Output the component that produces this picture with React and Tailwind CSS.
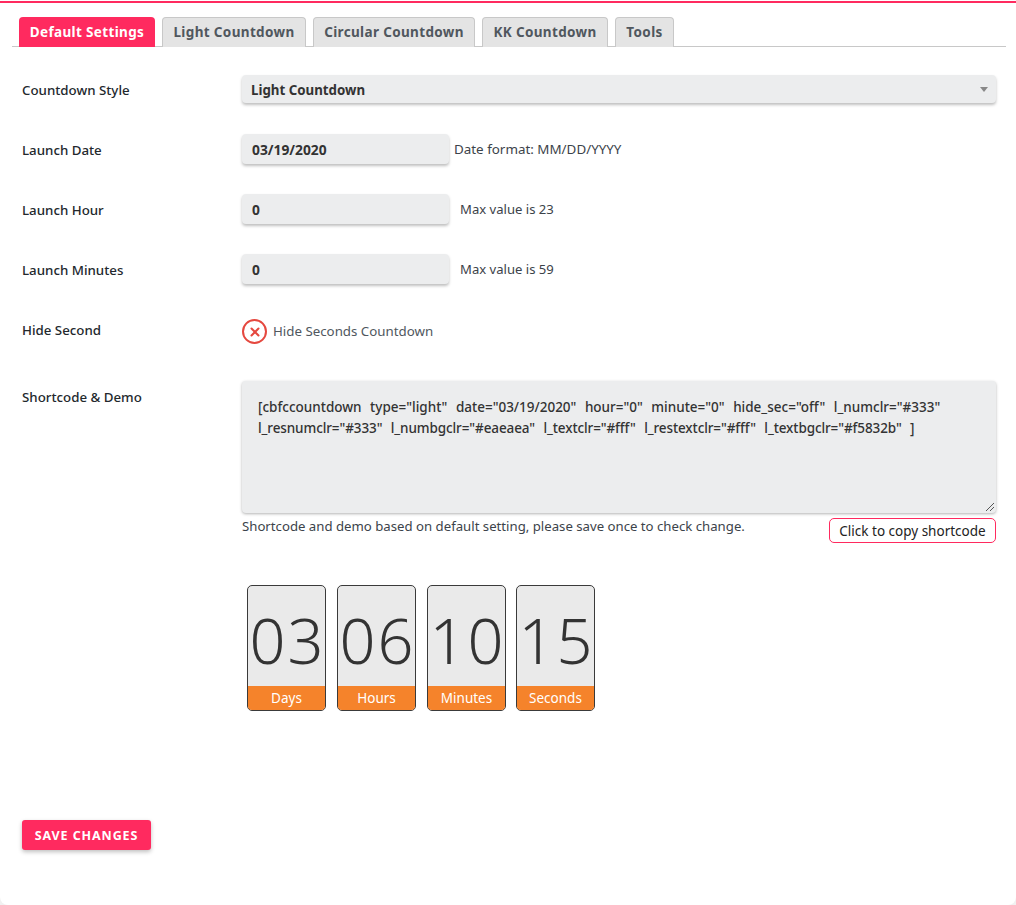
import React from 'react';
import { X } from 'lucide-react';

const tabs = ['Default Settings', 'Light Countdown', 'Circular Countdown', 'KK Countdown', 'Tools'];
const tabWidths = ['w-[136px]', 'w-[144px]', 'w-[162px]', 'w-[126px]', 'w-[59px]'];

const counters = [
  { value: '03', label: 'Days' },
  { value: '06', label: 'Hours' },
  { value: '10', label: 'Minutes' },
  { value: '15', label: 'Seconds' },
];

const fieldClass =
  'h-[30px] rounded-[4px] bg-[#ecedee] px-[10px] text-[13.8px] font-bold leading-[31px] text-[#333] shadow-[0_2px_3px_rgba(0,0,0,0.25)]';

const Row = ({ label, className, labelClass = 'pt-[3px]', children }) => (
  <div className={`flex ${className}`}>
    <div className={`w-[220px] shrink-0 text-[13.3px] font-medium text-[#23282d] ${labelClass}`}>{label}</div>
    <div className="min-w-0 flex-1">{children}</div>
  </div>
);

const App = () => {
  return (
    <div className="h-[905px] bg-[#f1f1f1] font-['Noto_Sans',sans-serif]">
      <div className="h-full rounded-b-[8px] bg-white pt-[1px]">
        <div className="h-[2px] bg-[#ff2a5f]" />
        <div className="ml-[12px] mr-[10px] mt-[14px] flex h-[30px] gap-[7px] border-b border-[#c8c8c8] pl-[7px]">
          {tabs.map((tab, i) => (
            <div
              key={tab}
              className={`flex h-[30px] items-center justify-center rounded-t-[4px] text-[13.5px] font-bold tracking-[0.35px] ${tabWidths[i]} ${
                i === 0
                  ? 'bg-[#ff2a5f] text-white'
                  : 'border border-b-0 border-[#c8c8c8] bg-[#e4e4e4] text-[#50575e]'
              }`}
            >
              {tab}
            </div>
          ))}
        </div>

        <div className="pl-[22px] pr-[20px]">
          <Row label="Countdown Style" className="mt-[28px] h-[28px] items-center">
            <div className={`${fieldClass} flex !h-[28px] items-center justify-between !px-[9px]`}>
              <span className="pt-[2px] text-[13.3px]">Light Countdown</span>
              <span className="mr-[-1px] h-0 w-0 border-x-[4px] border-t-[5px] border-x-transparent border-t-[#888]" />
            </div>
          </Row>

          <Row label="Launch Date" className="mt-[31px] h-[30px] items-center">
            <div className="flex items-center">
              <div className={`${fieldClass} w-[207px]`}>03/19/2020</div>
              <span className="ml-[5px] text-[13.4px] text-[#3c434a]">Date format: MM/DD/YYYY</span>
            </div>
          </Row>

          <Row label="Launch Hour" className="mt-[30px] h-[30px] items-center">
            <div className="flex items-center">
              <div className={`${fieldClass} w-[207px]`}>0</div>
              <span className="ml-[11px] pt-[1px] text-[13.1px] text-[#3c434a]">Max value is 23</span>
            </div>
          </Row>

          <Row label="Launch Minutes" className="mt-[30px] h-[30px] items-center">
            <div className="flex items-center">
              <div className={`${fieldClass} w-[207px]`}>0</div>
              <span className="ml-[11px] pt-[1px] text-[13.1px] text-[#3c434a]">Max value is 59</span>
            </div>
          </Row>

          <Row label="Hide Second" className="mt-[35px] h-[32px] items-start" labelClass="pt-[2px]">
            <div className="flex items-center">
              <div className="flex h-[25px] w-[25px] items-center justify-center rounded-full border-2 border-[#e5483f] text-[#e5483f]">
                <X size={14} strokeWidth={3.5} />
              </div>
              <span className="ml-[6px] text-[13.3px] text-[#50575e]">Hide Seconds Countdown</span>
            </div>
          </Row>

          <Row label="Shortcode & Demo" className="mt-[30px]" labelClass="pt-[7px]">
            <div className="relative h-[132px] rounded-[4px] bg-[#ecedee] px-[16px] pt-[16px] text-[13.5px] font-medium leading-[21px] text-[#333] shadow-[0_1px_3px_rgba(0,0,0,0.3)] [word-spacing:5px]">
              <div className="whitespace-nowrap">[cbfccountdown type="light" date="03/19/2020" hour="0" minute="0" hide_sec="off" l_numclr="#333"</div>
              <div className="whitespace-nowrap tracking-[-0.1px]">l_resnumclr="#333" l_numbgclr="#eaeaea" l_textclr="#fff" l_restextclr="#fff" l_textbgclr="#f5832b" ]</div>
              <svg className="absolute bottom-[1px] right-[1px]" width="10" height="10" viewBox="0 0 10 10">
                <path d="M1 9 L9 1 M5 9 L9 5" stroke="#555" strokeWidth="1" fill="none" />
              </svg>
            </div>
            <div className="mt-[5px] flex items-start justify-between">
              <span className="-mt-[1px] text-[13.2px] text-[#3c434a]">Shortcode and demo based on default setting, please save once to check change.</span>
              <button className="h-[25px] w-[167px] rounded-[5px] border border-[#ff2a5f] bg-white text-[13.5px] leading-[22px] text-[#222]">
                Click to copy shortcode
              </button>
            </div>

            <div className="ml-[5px] mt-[42px] flex gap-[11px]">
              {counters.map((c) => (
                <div
                  key={c.label}
                  className="flex h-[126px] w-[79px] flex-col overflow-hidden rounded-[5px] border border-[#3a3a3a] bg-[#eaeaea] last:-ml-[1px]"
                >
                  <div className="flex flex-1 items-center justify-center pl-[2px] pt-[6px] text-[63px] font-light leading-none tracking-[2px] text-[#333]">
                    {c.value}
                  </div>
                  <div className="flex h-[24px] items-center justify-center bg-[#f5832b] text-[13.5px] text-white">
                    {c.label}
                  </div>
                </div>
              ))}
            </div>
          </Row>

          <button className="mt-[109px] block h-[30px] w-[129px] rounded-[3px] bg-[#ff2a5f] pt-[2px] text-[12.5px] font-bold tracking-[0.9px] text-white shadow-[0_2px_4px_rgba(0,0,0,0.25)]">
            SAVE CHANGES
          </button>
        </div>
      </div>
    </div>
  );
};

export default App;
